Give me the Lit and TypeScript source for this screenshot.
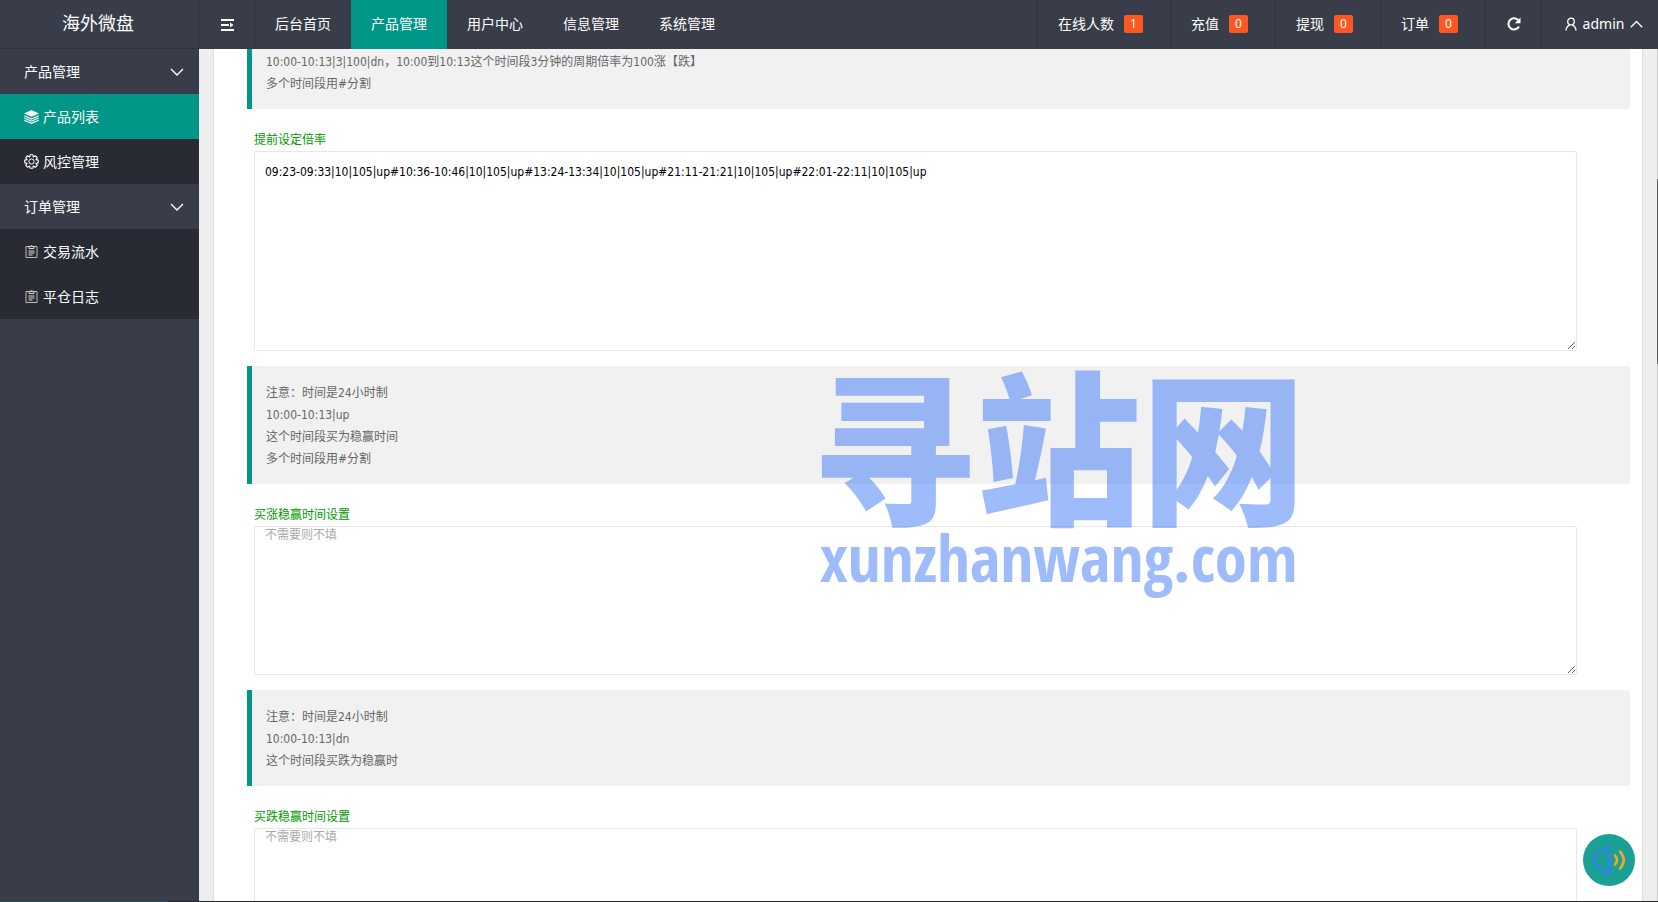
import { LitElement, html, css, svg, nothing } from "lit";
import { customElement } from "lit/decorators.js";

const chevronDown = html`<svg viewBox="0 0 14 8" width="14" height="8"><path d="M1 1l6 6 6-6" fill="none" stroke="currentColor" stroke-width="1.4"/></svg>`;

const polar = (r: number, a: number) => `${(7.5 + r * Math.cos(a)).toFixed(2)} ${(7.5 + r * Math.sin(a)).toFixed(2)}`;
const gearOutline =
  `M${polar(4.8, -Math.PI / 8)}` +
  Array.from({ length: 8 }, (_, i) => {
    const a = (i * Math.PI) / 4;
    return `L${polar(6.9, a - 0.2)}L${polar(6.9, a + 0.2)}L${polar(4.8, a + Math.PI / 8)}`;
  }).join("") + "Z";

const icons: Record<string, unknown> = {
  layers: svg`<path d="M7.5 1L15 4.4 7.5 7.8 0 4.4z" fill="currentColor"/><path d="M.3 6.8l7.2 3.2 7.2-3.2M.3 9l7.2 3.2L14.7 9M.3 11.2l7.2 3.2 7.2-3.2" fill="none" stroke="currentColor" stroke-width="1.2"/>`,
  gear: svg`<path d="${gearOutline}" fill="none" stroke="currentColor" stroke-width="1.1" stroke-linejoin="round"/><circle cx="7.5" cy="7.5" r="2.6" fill="none" stroke="currentColor" stroke-width="1"/>`,
  form: svg`<path d="M2 2.5h11v11H2z" fill="none" stroke="#b9bcb0" stroke-width="1"/><path d="M5 4.5V2.5h1.5a1 1 0 0 1 2 0H10v2zM4.5 7h6M4.5 9h6M4.5 11h4" fill="none" stroke="#d8d8d8" stroke-width="1"/>`,
};

interface Child { text: string; icon: string; active?: boolean }
const menu: { title: string; children: Child[] }[] = [
  { title: "产品管理", children: [{ text: "产品列表", icon: "layers", active: true }, { text: "风控管理", icon: "gear" }] },
  { title: "订单管理", children: [{ text: "交易流水", icon: "form" }, { text: "平仓日志", icon: "form" }] },
];
const nav = ["后台首页", "产品管理", "用户中心", "信息管理", "系统管理"];
const counters: [string, number][] = [["在线人数", 1], ["充值", 0], ["提现", 0], ["订单", 0]];

@customElement("app-root")
export class AppRoot extends LitElement {
  static styles = css`
    :host {
      display: grid;
      grid-template: 49px minmax(0, 1fr) 1px / 199px minmax(0, 1fr);
      height: 100vh;
      overflow: hidden;
      font: 14px/22px "Noto Sans", "Noto Sans CJK SC", sans-serif;
      color: #fff;
      background: #eee;
    }
    * { box-sizing: border-box; }
    a { color: inherit; text-decoration: none; }
    button { font: inherit; color: inherit; background: none; border: 0; padding: 0; cursor: pointer; }
    svg { display: block; flex: none; }
    .logo {
      display: flex; align-items: center; justify-content: center;
      margin: 0; font-size: 18px; font-weight: 400;
      background: #393d49;
      border-right: 1px solid #2f323d; border-bottom: 1px solid #2f323d;
      padding: 0 2px 2px 0;
    }
    .bar { display: flex; background: #393d49; }
    .toggle { width: 56px; display: flex; align-items: center; justify-content: center; border-right: 1px solid #2f323d; }
    .nav { display: flex; flex: 1; }
    .nav a { display: flex; align-items: center; padding: 0 20px 2px; }
    .nav .active { background: #009688; }
    .tools { display: flex; }
    .tool { display: flex; align-items: center; padding-bottom: 2px; border-left: 1px solid #2f323d; }
    .counter { padding: 0 27px 2px 20px; gap: 10px; }
    .badge {
      width: 19px; height: 18px; line-height: 18px; font-size: 12px; text-align: center;
      background: #ff5722; border-radius: 2px;
    }
    .refresh { width: 56px; justify-content: center; }
    .user { width: 117px; justify-content: center; gap: 6px; padding-left: 8px; }
    .side { background: #393d49; overflow: hidden; }
    .group { display: flex; flex-direction: column; }
    .heading { display: flex; align-items: center; justify-content: space-between; height: 45px; padding: 0 15px 0 24px; }
    .child { display: flex; align-items: center; gap: 4px; height: 45px; padding: 0 24px; background: #282b33; }
    .child.active { background: #009688; }
    .view { display: grid; grid-template-columns: minmax(0, 1fr) 1px; gap: 15px; padding-left: 15px; overflow: hidden; }
    .card {
      background: #fff; color: #666; overflow: hidden;
      font-size: 12px; font-family: "DejaVu Sans Condensed", "Noto Sans CJK SC", sans-serif;
      padding: 0 12px 0 33px; box-shadow: 0 0 2px rgba(0, 0, 0, 0.2);
    }
    .note { margin: 0; padding: 16px 14px 14px; background: #f1f1f1; border-left: 5px solid #009688; border-radius: 0 2px 2px 0; }
    .note.scrolled { padding-top: 2px; }
    .field { display: flex; flex-direction: column; padding: 20px 53px 15px 7px; }
    .field label { color: #090; }
    textarea {
      display: block; width: 100%; height: 149px; margin: 0; padding: 0 10px; resize: vertical;
      border: 1px solid #e6e6e6; border-radius: 2px; outline: 0; background: #fff;
      font: inherit; line-height: 16px; color: #000;
    }
    textarea.tall { height: 200px; padding: 10px; line-height: 20px; }
    textarea::placeholder { color: #aaa; }
    .track { background: #cdcdcd; padding-top: 130px; }
    .thumb { height: 185px; background: #606060; }
    .edge { grid-column: 1 / -1; background: linear-gradient(90deg, #1d5561 168px, #25262b 168px); }
    .watermark {
      position: absolute; left: 811px; top: 359px; pointer-events: none;
      color: rgba(61, 122, 247, 0.5); font-family: "Noto Sans CJK SC", sans-serif; font-weight: 900;
      display: flex; flex-direction: column; align-items: center; white-space: nowrap;
    }
    .mark-name { font-size: 165px; line-height: 164px; }
    .mark-site { font-family: "Open Sans Condensed", "Noto Sans Condensed", "Roboto Condensed", "Noto Sans CJK SC", sans-serif; font-size: 65px; line-height: 68px; }
    .sound {
      position: absolute; right: 23px; bottom: 16px; width: 52px; height: 52px;
      border-radius: 50%; background: #1aa094;
    }
  `;

  private note(lines: string[], scrolled = false) {
    return html`<blockquote class="note ${scrolled ? "scrolled" : ""}">${lines.map((l) => html`<div>${l}</div>`)}</blockquote>`;
  }

  private field(id: string, label: string, value = "") {
    return html`<div class="field">
      <label for=${id}>${label}</label>
      <textarea id=${id} class=${value ? "tall" : ""} spellcheck="false" placeholder=${value ? nothing : "不需要则不填"} .value=${value}></textarea>
    </div>`;
  }

  render() {
    return html`
      <h1 class="logo">海外微盘</h1>
      <header class="bar">
        <button class="toggle" aria-label="收起菜单">
          <svg width="14" height="14" viewBox="0 0 14 14"><path d="M1 2h13M1 7h8M1 12h13" stroke="currentColor" stroke-width="2"/><path d="M10 4.500L13.500 7 10 9.500z" fill="currentColor"/></svg>
        </button>
        <nav class="nav">${nav.map((t, i) => html`<a href="#" class=${i === 1 ? "active" : ""}>${t}</a>`)}</nav>
        <div class="tools">
          ${counters.map(([t, n]) => html`<a href="#" class="tool counter">${t}<span class="badge">${n}</span></a>`)}
          <button class="tool refresh" aria-label="刷新">
            <svg width="14" height="14" viewBox="0 0 14 14"><path d="M12 9.500A5.600 5.600 0 1 1 11.500 3.500" fill="none" stroke="currentColor" stroke-width="2"/><path d="M13.500 .5v5.700H7.800z" fill="currentColor"/></svg>
          </button>
          <button class="tool user">
            <svg width="12" height="14" viewBox="0 0 12 14"><circle cx="6" cy="4.500" r="3.300" fill="none" stroke="currentColor" stroke-width="1.300"/><path d="M1 13.500C1 10 3.500 8.600 4.800 7.800M11 13.500C11 10 8.500 8.600 7.200 7.800" fill="none" stroke="currentColor" stroke-width="1.300"/></svg>
            <span>admin</span>
            <svg width="13" height="8" viewBox="0 0 13 8"><path d="M.8 7.200l5.700-5.700 5.700 5.700" fill="none" stroke="currentColor" stroke-width="1.300"/></svg>
          </button>
        </div>
      </header>
      <aside class="side">
        ${menu.map((g) => html`<div class="group">
          <button class="heading">${g.title}${chevronDown}</button>
          ${g.children.map((c) => html`<a href="#" class="child ${c.active ? "active" : ""}"><svg width="15" height="15" viewBox="0 0 15 15">${icons[c.icon]}</svg>${c.text}</a>`)}
        </div>`)}
      </aside>
      <main class="view">
        <section class="card">
          ${this.note(["10:00-10:13|3|100|dn，10:00到10:13这个时间段3分钟的周期倍率为100涨【跌】", "多个时间段用#分割"], true)}
          ${this.field("rate", "提前设定倍率", "09:23-09:33|10|105|up#10:36-10:46|10|105|up#13:24-13:34|10|105|up#21:11-21:21|10|105|up#22:01-22:11|10|105|up")}
          ${this.note(["注意：时间是24小时制", "10:00-10:13|up", "这个时间段买为稳赢时间", "多个时间段用#分割"])}
          ${this.field("up", "买涨稳赢时间设置")}
          ${this.note(["注意：时间是24小时制", "10:00-10:13|dn", "这个时间段买跌为稳赢时"])}
          ${this.field("down", "买跌稳赢时间设置")}
        </section>
        <div class="track"><div class="thumb"></div></div>
      </main>
      <div class="edge"></div>
      <div class="watermark"><span class="mark-name">寻站网</span><span class="mark-site">xunzhanwang.com</span></div>
      <button class="sound" aria-label="声音">
        <svg width="52" height="52" viewBox="0 0 52 52" fill="none" stroke-linecap="round" stroke-linejoin="round"><path d="M26 11.500L17.500 18.500H14Q11.500 20 11.500 26T14 33.500H17.500L26 40.500V17" stroke="#3285f0" stroke-width="2.600"/><path d="M32 21.500q4 4.500 0 9M37 17.500q7.500 8.500 0 17" stroke="#f5a623" stroke-width="2.600"/></svg>
      </button>
    `;
  }
}
